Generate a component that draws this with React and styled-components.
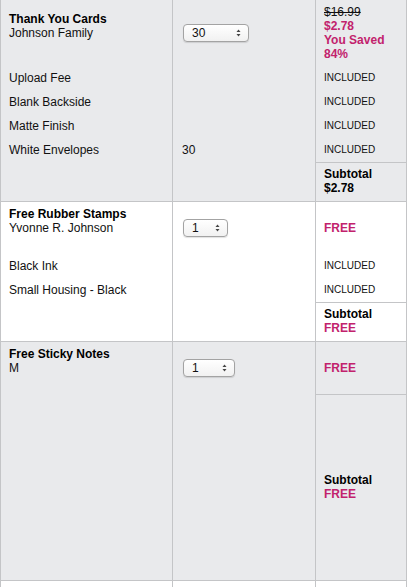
import React from "react";
import styled, { createGlobalStyle } from "styled-components";

const GlobalStyle = createGlobalStyle`
  * { box-sizing: border-box; }
  body {
    margin: 0;
    background: #fff;
    font-family: "Liberation Sans", Arial, sans-serif;
    font-size: 12px;
    line-height: 14px;
    color: #111;
  }
`;

const LINE = "#c4c5c7";
const PINK = "#c2226c";

const Cart = styled.div`
  width: 407px;
`;

const Group = styled.div`
  display: grid;
  grid-template-columns: 172px 143px 91px;
  border-left: 1px solid ${LINE};
  border-bottom: 1px solid ${LINE};
  background: ${(p) => (p.$shaded ? "#e9eaec" : "#fff")};
`;

const Cell = styled.div`
  display: flex;
  flex-direction: column;
  justify-content: center;
  align-items: flex-start;
  border-right: 1px solid ${LINE};
  padding: 0 ${(p) => p.$padX || 8}px;
`;

const HeadCell = styled(Cell)`
  padding-top: 5px;
  padding-bottom: ${(p) => (p.$blankLine ? 19 : 5)}px;
`;

const OptCell = styled(Cell)`
  height: 24px;
  font-size: ${(p) => (p.$small ? 10 : 12)}px;
`;

const SubCell = styled(Cell)`
  min-height: ${(p) => p.$minH || 39}px;
  padding-top: 4px;
  padding-bottom: 6px;
  border-top: ${(p) => (p.$ruled ? `1px solid ${LINE}` : "none")};
`;

const FillCell = styled(Cell)`
  min-height: 20px;
`;

const Title = styled.div`
  font-weight: bold;
  color: #000;
`;

const Name = styled.div`
  color: #111;
`;

const OldPrice = styled.div`
  text-decoration: line-through;
  color: #111;
`;

const Strong = styled.div`
  font-weight: bold;
  color: ${(p) => (p.$pink ? PINK : "#000")};
`;

const SelectBox = styled.div`
  display: flex;
  align-items: center;
  justify-content: space-between;
  width: ${(p) => p.$w}px;
  height: 18px;
  margin-left: 1px;
  padding: 0 7px 0 8px;
  border: 1px solid #a3a3a3;
  border-radius: 4px;
  background: linear-gradient(#ffffff, #f1f1f1);
  box-shadow: 0 1px 1px rgba(0, 0, 0, 0.12);
  font-size: 12px;
  color: #111;
`;

const Arrows = () => (
  <svg width="5" height="8" viewBox="0 0 5 8">
    <path d="M2.5 0.5 L4.5 3 L0.5 3 Z" fill="#444" />
    <path d="M0.5 5 L4.5 5 L2.5 7.5 Z" fill="#444" />
  </svg>
);

const QtySelect = ({ value, width }) => (
  <SelectBox $w={width}>
    <span>{value}</span>
    <Arrows />
  </SelectBox>
);

const orders = [
  {
    title: "Thank You Cards",
    name: "Johnson Family",
    qty: "30",
    selectWidth: 66,
    shaded: true,
    price: { old: "$16.99", now: "$2.78", saved: "84%" },
    options: [
      ["Upload Fee", ""],
      ["Blank Backside", ""],
      ["Matte Finish", ""],
      ["White Envelopes", "30"],
    ],
    subtotal: "$2.78",
  },
  {
    title: "Free Rubber Stamps",
    name: "Yvonne R. Johnson",
    qty: "1",
    selectWidth: 45,
    shaded: false,
    options: [
      ["Black Ink", ""],
      ["Small Housing - Black", ""],
    ],
    subtotal: "FREE",
  },
  {
    title: "Free Sticky Notes",
    name: "M",
    qty: "1",
    selectWidth: 52,
    shaded: true,
    options: [],
    subtotal: "FREE",
    tall: 186,
  },
];

const PriceInfo = ({ price }) =>
  price ? (
    <>
      <OldPrice>{price.old}</OldPrice>
      <Strong $pink>{price.now}</Strong>
      <Strong $pink>You Saved</Strong>
      <Strong $pink>{price.saved}</Strong>
    </>
  ) : (
    <Strong $pink>FREE</Strong>
  );

const OrderGroup = ({ order }) => (
  <Group $shaded={order.shaded}>
    <HeadCell $blankLine>
      <Title>{order.title}</Title>
      <Name>{order.name}</Name>
    </HeadCell>
    <HeadCell $padX={9}>
      <QtySelect value={order.qty} width={order.selectWidth} />
    </HeadCell>
    <HeadCell>
      <PriceInfo price={order.price} />
    </HeadCell>

    {order.options.map(([label, count]) => (
      <React.Fragment key={label}>
        <OptCell>{label}</OptCell>
        <OptCell $padX={9}>{count}</OptCell>
        <OptCell $small>INCLUDED</OptCell>
      </React.Fragment>
    ))}

    <SubCell $minH={order.tall} />
    <SubCell $minH={order.tall} />
    <SubCell $minH={order.tall} $ruled>
      <Strong>Subtotal</Strong>
      <Strong $pink={order.subtotal === "FREE"}>{order.subtotal}</Strong>
    </SubCell>
  </Group>
);

export default function App() {
  return (
    <>
      <GlobalStyle />
      <Cart>
        {orders.map((o) => (
          <OrderGroup key={o.title} order={o} />
        ))}
        <Group>
          <FillCell />
          <FillCell />
          <FillCell />
        </Group>
      </Cart>
    </>
  );
}
